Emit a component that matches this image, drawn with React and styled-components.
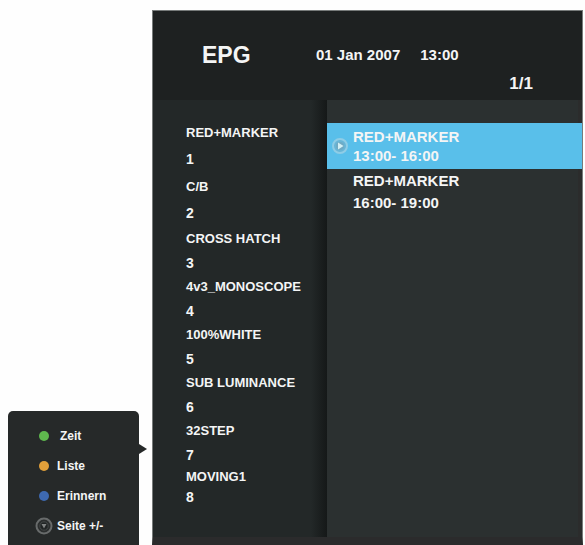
import React from "react";
import styled, { createGlobalStyle } from "styled-components";

const channels = [
  { id: 1, name: "RED+MARKER", line: 27 },
  { id: 2, name: "C/B", line: 27 },
  { id: 3, name: "CROSS HATCH", line: 24 },
  { id: 4, name: "4v3_MONOSCOPE", line: 24 },
  { id: 5, name: "100%WHITE", line: 24 },
  { id: 6, name: "SUB LUMINANCE", line: 24 },
  { id: 7, name: "32STEP", line: 24 },
  { id: 8, name: "MOVING1", line: 20 },
];

const programs = [
  { name: "RED+MARKER", time: "13:00- 16:00", active: true },
  { name: "RED+MARKER", time: "16:00- 19:00", active: false },
];

const keys = [
  { label: "Zeit", color: "#5fb94e", indent: true },
  { label: "Liste", color: "#e2a03a" },
  { label: "Erinnern", color: "#3e69b0" },
  { label: "Seite +/-" },
];

const PlayIcon = () => (
  <svg width="18" height="18" viewBox="0 0 18 18" aria-hidden="true">
    <circle cx="9" cy="9" r="7" fill="#68b5d6" stroke="#8fcde6" strokeWidth="2" />
    <circle cx="9" cy="9" r="4" fill="#6faac4" />
    <path d="M7 5.5 L12.5 9 L7 12.5 Z" fill="#d3f0f5" />
  </svg>
);

const PageIcon = () => (
  <svg width="18" height="18" viewBox="0 0 18 18" aria-hidden="true">
    <circle cx="9" cy="9" r="7.5" fill="#2b2e2e" stroke="#686b6b" strokeWidth="2" />
    <circle cx="9" cy="9" r="4.2" fill="#202424" stroke="#454949" />
    <path d="M6.5 7 H11.5 L9 11.5 Z" fill="#808383" />
  </svg>
);

const App = () => {
  return (
    <Page>
      <GlobalStyle />
      <KeyMenu aria-label="Tasten">
        {keys.map(({ label, color, indent }) => (
          <KeyButton key={label} type="button" $indent={indent}>
            <KeyMark>{color ? <Dot $color={color} /> : <PageIcon />}</KeyMark>
            <span>{label}</span>
          </KeyButton>
        ))}
      </KeyMenu>
      <Guide>
        <Header>
          <h1>EPG</h1>
          <DateTime>
            <span>01 Jan 2007</span>
            <span>13:00</span>
          </DateTime>
          <Pager>1/1</Pager>
        </Header>
        <Body>
          <ChannelList>
            {channels.map(({ id, name, line }) => (
              <Channel key={id} $line={line}>
                <span>{name}</span>
                <strong>{id}</strong>
              </Channel>
            ))}
          </ChannelList>
          <ProgramList>
            {programs.map(({ name, time, active }) => (
              <li key={time}>
                <ProgramButton type="button" $active={active}>
                  <ProgramMark>{active && <PlayIcon />}</ProgramMark>
                  <ProgramText $active={active}>
                    <span>{name}</span>
                    <span>{time}</span>
                  </ProgramText>
                </ProgramButton>
              </li>
            ))}
          </ProgramList>
        </Body>
      </Guide>
    </Page>
  );
};

const GlobalStyle = createGlobalStyle`
  * {
    box-sizing: border-box;
  }

  body {
    margin: 0;
    background: #fefefe;
    color: #f4f5f5;
    font-family: "Liberation Sans", Arial, sans-serif;
    font-weight: 700;
  }

  button {
    border: 0;
    padding: 0;
    background: none;
    color: inherit;
    font: inherit;
    text-align: left;
    cursor: pointer;
  }

  ul {
    margin: 0;
    padding: 0;
    list-style: none;
  }
`;

const Page = styled.main`
  display: grid;
  grid-template-columns: 131px 1fr;
  column-gap: 13px;
  min-height: 100vh;
  padding: 10px 2px 0 8px;
`;

const KeyMenu = styled.nav`
  position: relative;
  display: flex;
  flex-direction: column;
  align-self: end;
  padding: 10px 0 4px 27px;
  border-radius: 5px 5px 0 0;
  background: #262929;

  &::after {
    content: "";
    position: absolute;
    top: 33px;
    left: 100%;
    border: 5px solid transparent;
    border-left: 8px solid #262929;
    border-right: 0;
  }
`;

const KeyButton = styled.button`
  display: flex;
  align-items: center;
  gap: ${({ $indent }) => ($indent ? "7px" : "4px")};
  height: 30px;
  font-size: 12px;
`;

const KeyMark = styled.span`
  display: flex;
  justify-content: center;
  width: 18px;
`;

const Dot = styled.i`
  width: 10px;
  height: 10px;
  border-radius: 50%;
  background: ${({ $color }) => $color};
`;

const Guide = styled.section`
  display: flex;
  flex-direction: column;
  border: 1px solid #777b7a;
  border-bottom: 8px solid #2b2b2c;
  background: #232727;
`;

const Header = styled.header`
  display: grid;
  grid-template-columns: 114px 1fr;
  row-gap: 4px;
  align-items: center;
  padding: 30px 49px 5px 49px;
  background: #1e2121;

  h1 {
    margin: 0;
    font-size: 23px;
    line-height: 28px;
  }
`;

const DateTime = styled.div`
  display: flex;
  gap: 20px;
  font-size: 15px;
  line-height: 20px;
`;

const Pager = styled.div`
  grid-column: 1 / -1;
  font-size: 17px;
  line-height: 22px;
  text-align: right;
`;

const Body = styled.div`
  display: grid;
  grid-template-columns: 174px 1fr;
  flex: 1;
`;

const ChannelList = styled.ul`
  padding: 19px 0 0 33px;
  background: linear-gradient(to left, #151818, #232828 16px);
`;

const Channel = styled.li`
  display: flex;
  flex-direction: column;
  font-size: 13px;
  line-height: ${({ $line }) => $line}px;

  strong {
    font-size: 14px;
  }
`;

const ProgramList = styled.ul`
  padding-top: 23px;
  border-right: 4px solid #2b2c2c;
  background: #2b3030;

  li {
    margin-right: -4px;
  }
`;

const ProgramButton = styled.button`
  display: flex;
  align-items: center;
  width: 100%;
  height: 46px;
  background: ${({ $active }) => ($active ? "#59bfea" : "transparent")};
`;

const ProgramMark = styled.span`
  display: flex;
  flex: none;
  width: 26px;
  padding-left: 4px;
`;

const ProgramText = styled.span`
  display: flex;
  flex-direction: column;
  font-size: 15px;
  line-height: ${({ $active }) => ($active ? "19px" : "22px")};
`;

export default App;
